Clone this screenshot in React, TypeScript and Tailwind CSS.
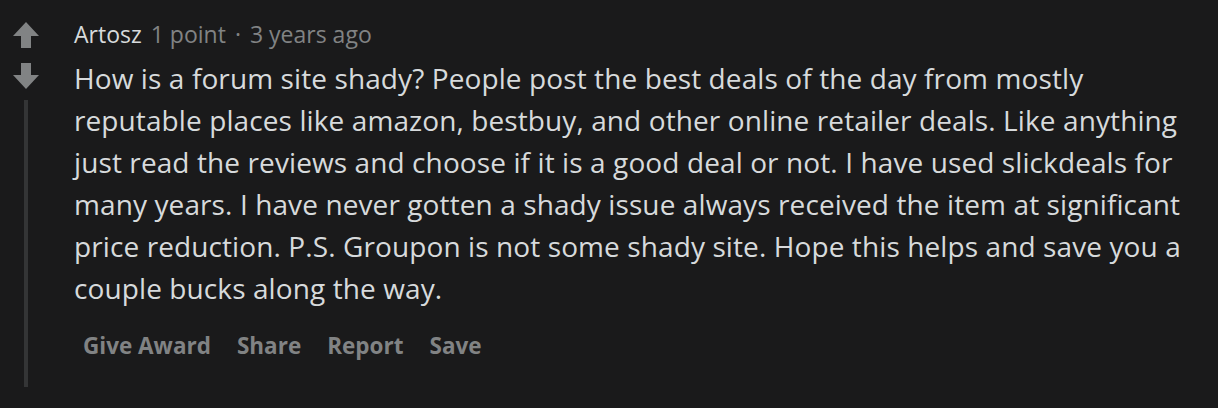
const lines = [
  "How is a forum site shady? People post the best deals of the day from mostly",
  "reputable places like amazon, bestbuy, and other online retailer deals. Like anything",
  "just read the reviews and choose if it is a good deal or not. I have used slickdeals for",
  "many years. I have never gotten a shady issue always received the item at significant",
  "price reduction. P.S. Groupon is not some shady site. Hope this helps and save you a",
  "couple bucks along the way.",
]

function Arrow({ down }: { down?: boolean }) {
  return (
    <svg width="26" height="26" viewBox="0 0 26 26" className={down ? "rotate-180" : ""}>
      <path d="M13 0 L26 14 H18 V26 H8 V14 H0 Z" fill="#818384" />
    </svg>
  )
}

export default function App() {
  return (
    <div className="w-[1218px] h-[408px] bg-[#1a1a1b] overflow-hidden" style={{ fontFamily: '"Open Sans", "Noto Sans", sans-serif' }}>
      <div className="flex pt-[19px]">
        {/* vote column + thread line */}
        <div className="w-[74px] shrink-0">
          <div className="w-[52px] flex flex-col items-center pt-[3px]">
            <Arrow />
            <div className="h-[15px]" />
            <Arrow down />
            <div className="w-[4px] h-[287px] mt-[11px] bg-[#343536]" />
          </div>
        </div>
        <div className="flex flex-col">
          <div className="flex items-baseline gap-[9px] text-[23px] leading-[30px] text-[#818384]">
            <span className="text-[#d7dadc]">Artosz</span>
            <span>1 point</span>
            <span>·</span>
            <span>3 years ago</span>
          </div>
          <div className="mt-[8px] text-[28px] leading-[42px] tracking-[0.1px] text-[#d7dadc]">
            {lines.map((l, i) => (
              <div key={i} className="whitespace-nowrap">{l}</div>
            ))}
          </div>
          <div className="flex gap-[26px] ml-[9px] mt-[22px] text-[22.5px] leading-[30px] font-bold text-[#818384]">
            <span>Give Award</span>
            <span>Share</span>
            <span>Report</span>
            <span>Save</span>
          </div>
        </div>
      </div>
    </div>
  )
}
